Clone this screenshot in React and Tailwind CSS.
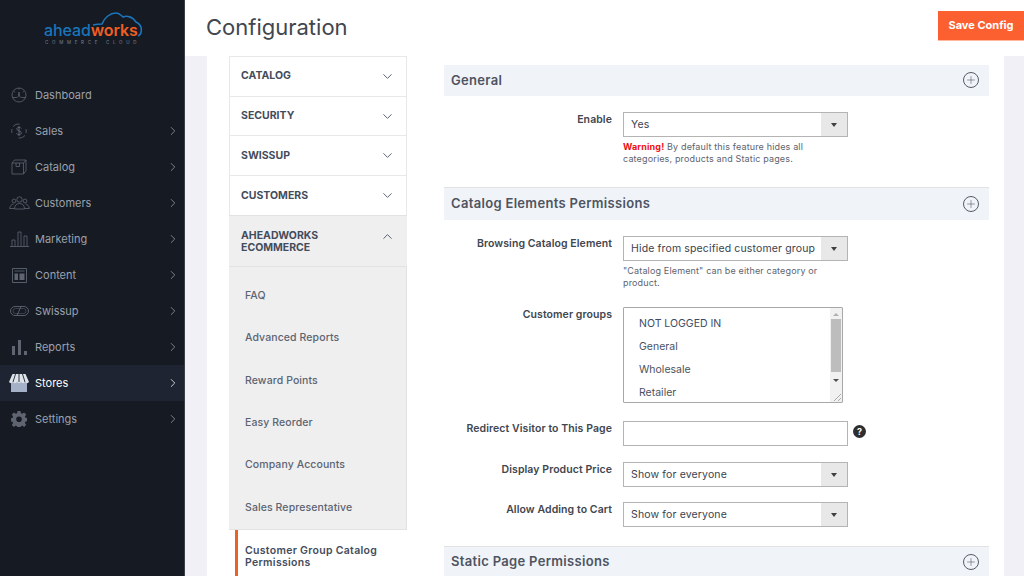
import { ChevronDown, ChevronRight, ChevronUp, Plus } from "lucide-react"

const font = "font-['Inter','Open_Sans',sans-serif]"

const DashboardIcon = () => (
  <svg viewBox="0 0 16 16" className="h-4 w-4" fill="none" stroke="currentColor" strokeWidth="0.8">
    <circle cx="8" cy="8" r="7" />
    <path d="M1.500 10.500h4c1 0 1.500-.6 2-1.500l.5-4 .5 4c.5.9 1 1.500 2 1.500h4" />
    <path d="M8 1v1.500M3.200 4.500l1 .8M12.800 4.500l-1 .8" />
  </svg>
)

const SalesIcon = () => (
  <svg viewBox="0 0 18 18" className="h-[18px] w-[18px]" fill="none" stroke="currentColor" strokeWidth="0.8">
    <path d="M3 4.500A7 7 0 0 1 9.500 2M15 13.500A7 7 0 0 1 8.500 16M2 11a7 7 0 0 1 0-4M16 7a7 7 0 0 1 0 4" />
    <path d="M11.200 6.500C10.800 5.700 10 5.300 9 5.300c-1.300 0-2.200.7-2.200 1.700 0 2.400 4.500 1.300 4.500 3.900 0 1.100-1 1.800-2.300 1.800-1.100 0-2-.5-2.400-1.400M9 4v10" strokeWidth="1" />
  </svg>
)

const CatalogIcon = () => (
  <svg viewBox="0 0 16 16" className="h-4 w-4" fill="none" stroke="currentColor" strokeWidth="0.8">
    <path d="M1 4h11.500v11H1zM1 4l2.500-3H15v10.500l-2.500 3.500M12.500 4 15 1" />
    <path d="M5 4v3.500h3.500V4" />
  </svg>
)

const CustomersIcon = () => (
  <svg viewBox="0 0 21 14" className="h-[14px] w-[21px]" fill="none" stroke="currentColor" strokeWidth="0.8">
    <circle cx="10.500" cy="3.500" r="2.700" />
    <circle cx="5" cy="5" r="1.900" />
    <circle cx="16" cy="5" r="1.900" />
    <path d="M5.500 13c0-3.500 2-5.500 5-5.500s5 2 5 5.500zM4.500 8C2.500 8.300 1 10 .6 12.500h4.600M16.500 8c2 .3 3.500 2 3.900 4.500h-4.600" />
  </svg>
)

const MarketingIcon = () => (
  <svg viewBox="0 0 19 16" className="h-4 w-[19px]" fill="none" stroke="currentColor" strokeWidth="0.8">
    <path d="M0 15.500h19M2 15.500V9h3v6.500M8 15.500V1h3v14.500M14 15.500V5h3v10.500" />
  </svg>
)

const ContentIcon = () => (
  <svg viewBox="0 0 15 15" className="h-[15px] w-[15px]" fill="none" stroke="currentColor" strokeWidth="0.9">
    <path d="M.5.500h14v14H.5zM2.500 3h10" />
    <path d="M2.500 5.500h3.500v6.500H2.500zM7.500 5.500h5v6.500h-5z" fill="currentColor" stroke="none" />
  </svg>
)

const SwissupIcon = () => (
  <svg viewBox="0 0 19 10" className="h-[10px] w-[19px]" fill="none" stroke="currentColor" strokeWidth="0.9">
    <rect x="0.500" y="0.500" width="18" height="9" rx="4.500" />
    <path d="M7 9.500 11 .5" />
    <rect x="3" y="2.500" width="13" height="5" rx="2.500" strokeWidth="0.5" />
  </svg>
)

const ReportsIcon = () => (
  <svg viewBox="0 0 15 15" className="h-[15px] w-[15px]" fill="currentColor">
    <path d="M0 6h3v9H0zM6 0h3v15H6zM12 11h3v4h-3z" />
  </svg>
)

const StoresIcon = () => (
  <svg viewBox="0 0 20 18" className="h-[18px] w-5">
    <path d="M2 8h16v10H2z" fill="#a5b1c6" />
    <path d="M3.500 0h13L20 8c-1 1.500-3 1.500-4 0-1 1.500-3 1.500-4 0-1 1.500-3 1.500-4 0-1 1.500-3 1.500-4 0-1 1.500-3 1.500-4 0z" fill="#dfe3ea" />
    <path d="M6.500 0 4 8M10 0v8M13.500 0 16 8" stroke="#1e2431" strokeWidth="0.9" />
  </svg>
)

const SettingsIcon = () => (
  <svg viewBox="0 0 16 16" className="h-4 w-4" fill="currentColor">
    <path
      fillRule="evenodd"
      d="M6.500 0h3l.4 2.200 1.300.6L13.100 1.500l2.100 2.100-1.300 1.900.6 1.300 2.200.4v3l-2.200.4-.6 1.300 1.300 1.900-2.100 2.100-1.900-1.300-1.300.6-.4 2.200h-3l-.4-2.200-1.300-.6-1.900 1.300L.8 13.900l1.300-1.900-.6-1.300L-.7 10.300V7.300l2.200-.4.6-1.300L.8 3.600 2.900 1.500l1.900 1.300 1.300-.6zM8 5.500a2.800 2.800 0 1 0 0 5.600 2.800 2.800 0 0 0 0-5.600z"
    />
  </svg>
)

const menu = [
  { label: "Dashboard", icon: <DashboardIcon /> },
  { label: "Sales", icon: <SalesIcon />, arrow: true },
  { label: "Catalog", icon: <CatalogIcon />, arrow: true },
  { label: "Customers", icon: <CustomersIcon />, arrow: true },
  { label: "Marketing", icon: <MarketingIcon />, arrow: true },
  { label: "Content", icon: <ContentIcon />, arrow: true },
  { label: "Swissup", icon: <SwissupIcon />, arrow: true },
  { label: "Reports", icon: <ReportsIcon />, arrow: true },
  { label: "Stores", icon: <StoresIcon />, arrow: true, active: true },
  { label: "Settings", icon: <SettingsIcon />, arrow: true },
]

const sections = ["CATALOG", "SECURITY", "SWISSUP", "CUSTOMERS"]
const subItems = ["FAQ", "Advanced Reports", "Reward Points", "Easy Reorder", "Company Accounts", "Sales Representative"]

const Logo = () => (
  <div className="relative h-[77px]">
    <svg viewBox="0 0 52 26" className="absolute left-[91px] top-[12px] h-[26px] w-[52px]" fill="none" stroke="#1b75bb" strokeWidth="1.600">
      <path d="M2 13C6 12 9 12 11 12 13 6 19 1 25 1 28 1 30 3 32 5 36 3 42 5 45 10 49 12 51 16 50 20 50 22 49 23 47 24" />
    </svg>
    <div className="absolute left-[44px] top-[23px] text-[16px] font-semibold leading-[14px] tracking-[-0.1px]">
      <span className="font-medium text-[#1b75bb]">ahead</span>
      <span className="text-[#ef5f23]">works</span>
    </div>
    <div className="absolute left-[45px] top-[40px] whitespace-nowrap text-[4.500px] leading-[5px] tracking-[3.700px] text-[#7c8492]">
      COMMERCE CLOUD
    </div>
  </div>
)

const Sidebar = () => (
  <aside className="flex h-full w-[185px] shrink-0 flex-col border-r border-[#3a3f48] bg-[#151a23]">
    <Logo />
    {menu.map((item) => (
      <div
        key={item.label}
        className={`flex h-9 items-center ${item.active ? "bg-[#1e2431] text-white" : "text-[#9ba1ad]"}`}
      >
        <div className={`flex w-[35px] shrink-0 justify-center pl-[3px] ${item.active ? "" : "text-[#5f6570]"}`}>
          {item.icon}
        </div>
        <span className="flex-1 text-[11px]">{item.label}</span>
        {item.arrow && <ChevronRight className="mr-[4px] h-[14px] w-[14px]" strokeWidth={1.3} />}
      </div>
    ))}
  </aside>
)

const ConfigNav = () => (
  <nav className="ml-[22px] w-[178px] shrink-0 text-[#444c5c]">
    {sections.map((name) => (
      <div
        key={name}
        className="flex h-[39.700px] items-center justify-between border-x border-t border-[#e8e8e8] pl-[11px] pr-[11px] text-[10.500px] font-bold"
      >
        {name}
        <ChevronDown className="h-[15px] w-[15px]" strokeWidth={1.4} />
      </div>
    ))}
    <div className="flex h-[52px] items-start justify-between border-y border-[#e2e2e2] bg-[#efefef] pl-[12px] pr-[12px] pt-[14px] text-[10.500px] font-bold leading-[12.500px]">
      <span>
        AHEADWORKS
        <br />
        ECOMMERCE
      </span>
      <ChevronUp className="-mt-[1px] h-[15px] w-[15px]" strokeWidth={1.4} />
    </div>
    <div className="border-b border-r border-[#e2e2e2] bg-[#efefef] pt-[8px]">
      {subItems.map((name) => (
        <div key={name} className="flex h-[42.300px] items-center pl-[16px] text-[10.500px] font-medium tracking-[0.1px] text-[#5c6472]">
          {name}
        </div>
      ))}
    </div>
    <div className="ml-[6px] w-fit border-l-[3px] border-[#ea6225] py-[15px] pl-[7px] text-[10.500px] font-semibold leading-[12.500px] tracking-[0.3px]">
      Customer Group Catalog
      <br />
      Permissions
    </div>
  </nav>
)

const SectionHeader = ({ title, className }) => (
  <div className={`flex items-center justify-between bg-[#f0f3f8] pl-[7px] pr-[10px] ${className}`}>
    <h2 className="text-[13px] font-semibold tracking-[0.32px] text-[#4e5461]">{title}</h2>
    <div className="-mt-[1px] flex h-4 w-4 items-center justify-center rounded-full border border-[#555b66] text-[#555b66]">
      <Plus className="h-3 w-3" strokeWidth={1.2} />
    </div>
  </div>
)

const Field = ({ label, className, children }) => (
  <div className={`grid grid-cols-[168px_225px_auto] gap-x-[11px] ${className}`}>
    <label className="pt-[2px] text-right text-[10.500px] font-semibold leading-[12px] tracking-[0.08px] text-[#41464f]">
      {label}
    </label>
    {children}
  </div>
)

const Select = ({ value }) => (
  <div className="flex h-[25px] items-stretch border border-[#b4b4b4] text-[10.500px] tracking-[0.14px] text-[#3b424e]">
    <div className="flex min-w-0 flex-1 items-center overflow-hidden whitespace-nowrap pl-[7px] pr-[5px]">{value}</div>
    <div className="flex w-[26px] items-center justify-center bg-[#e8e8e8]">
      <div className="h-0 w-0 border-x-[3px] border-t-[4px] border-x-transparent border-t-[#3f3f3f]" />
    </div>
  </div>
)

const Note = ({ children }) => (
  <p className="col-start-2 mt-1 text-[9px] leading-[11.500px] tracking-[0.15px] text-[#5e6470]">{children}</p>
)

const GroupList = () => (
  <div className="relative h-[96px] w-[220px] overflow-hidden rounded-[1px] border border-[#a8a8a8] pl-[15px] pt-[4px] text-[10.500px] leading-[23px] text-[#4b5260]">
    <div className="text-[#3c4a63]">NOT LOGGED IN</div>
    <div>General</div>
    <div>Wholesale</div>
    <div>Retailer</div>
    <div className="absolute bottom-0 right-0 top-0 flex w-[12px] flex-col items-center bg-[#f1f1f1] pr-[1px]">
      <div className="mt-[5px] h-0 w-0 border-x-[3px] border-b-[3px] border-x-transparent border-b-[#b0b0b0]" />
      <div className="mt-[3px] h-[53px] w-[10px] bg-[#bdbdbd]" />
      <div className="mt-[7px] h-0 w-0 border-x-[3px] border-t-[3px] border-x-transparent border-t-[#505050]" />
      <svg viewBox="0 0 12 12" className="absolute bottom-0 right-0 h-3 w-3" fill="none" stroke="#9a9a9a" strokeWidth="0.8">
        <path d="M11 4 4 11M11 8l-3 3" />
      </svg>
    </div>
  </div>
)

const App = () => (
  <div className={`flex h-[576px] w-[1024px] overflow-hidden bg-[#f0f0f6] ${font}`}>
    <Sidebar />
    <div className="flex min-w-0 flex-1 flex-col">
      <header className="flex h-[56px] shrink-0 items-start justify-between bg-white pl-[21px]">
        <h1 className="mt-[12px] text-[22px] leading-[30px] text-[#41464f]">Configuration</h1>
        <button className="mt-[11px] h-[30px] w-[86px] border-b border-[#ffb79d] bg-[#fd6030] text-[11px] font-bold text-white">
          Save Config
        </button>
      </header>
      <div className="ml-[22px] mr-[20px] flex flex-1 overflow-hidden bg-white">
        <ConfigNav />
        <main className="ml-[37px] mr-[15px] flex-1 pt-[9px]">
          <SectionHeader title="General" className="h-[31px]" />
          <Field label="Enable" className="mt-[16px]">
            <Select value="Yes" />
            <Note>
              <b className="text-[#f01010]">Warning!</b> By default this feature hides all
              <br />
              categories, products and Static pages.
            </Note>
          </Field>
          <SectionHeader title="Catalog Elements Permissions" className="mt-[23px] h-[33px] border-t border-[#e2e2e2]" />
          <Field label="Browsing Catalog Element" className="mt-[16px]">
            <Select value="Hide from specified customer group" />
            <Note>"Catalog Element" can be either category or product.</Note>
          </Field>
          <Field label="Customer groups" className="mt-[19px]">
            <GroupList />
          </Field>
          <Field label="Redirect Visitor to This Page" className="mt-[18px]">
            <div className="h-[25px] border border-[#b4b4b4]" />
            <div className="-ml-[6px] -mt-[2px] flex h-[25px] items-center">
              <div className="flex h-[13px] w-[13px] items-center justify-center rounded-full bg-[#2e2e2e] text-[9px] font-bold text-white">
                ?
              </div>
            </div>
          </Field>
          <Field label="Display Product Price" className="mt-[16px]">
            <Select value="Show for everyone" />
          </Field>
          <Field label="Allow Adding to Cart" className="mt-[15px]">
            <Select value="Show for everyone" />
          </Field>
          <SectionHeader title="Static Page Permissions" className="mt-[19px] h-[31px] border-t border-[#e2e2e2]" />
        </main>
      </div>
    </div>
  </div>
)

export default App
